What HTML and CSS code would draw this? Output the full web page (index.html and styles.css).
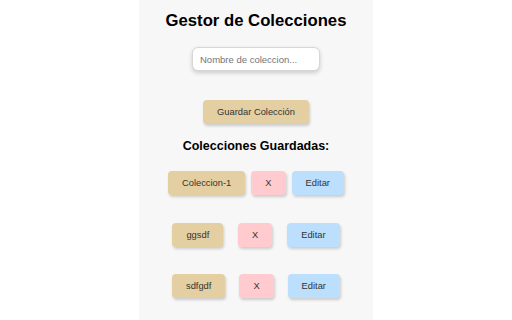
FILE: index.html
```html
<!DOCTYPE html>
<html lang="es">
<head>
<meta charset="utf-8">
<title>Gestor de Colecciones</title>
<link rel="stylesheet" href="styles.css">
</head>
<body>
<main class="panel">
  <h1 class="title">Gestor de Colecciones</h1>
  <input class="name-input" type="text" placeholder="Nombre de coleccion...">
  <button class="btn btn-beige btn-save">Guardar Colección</button>
  <h2 class="subtitle">Colecciones Guardadas:</h2>
  <ul class="list">
    <li class="row">
      <button class="btn btn-beige">Coleccion-1</button>
      <button class="btn btn-pink">X</button>
      <button class="btn btn-blue">Editar</button>
    </li>
    <li class="row">
      <button class="btn btn-beige">ggsdf</button>
      <button class="btn btn-pink">X</button>
      <button class="btn btn-blue">Editar</button>
    </li>
    <li class="row">
      <button class="btn btn-beige">sdfgdf</button>
      <button class="btn btn-pink">X</button>
      <button class="btn btn-blue">Editar</button>
    </li>
  </ul>
</main>
</body>
</html>
```

FILE: styles.css
```css
html, body {
  margin: 0;
  padding: 0;
  background: #ffffff;
  font-family: "Liberation Sans", Arial, sans-serif;
}

.panel {
  width: 234px;
  min-height: 100vh;
  margin: 0 auto;
  background: #f7f7f7;
  padding-top: 11px;
  box-sizing: border-box;
  display: flex;
  flex-direction: column;
  align-items: center;
}

.title {
  margin: 0;
  font-size: 16.7px;
  line-height: 20px;
  font-weight: bold;
  color: #000;
}

.name-input {
  margin-top: 16px;
  width: 128px;
  height: 24px;
  box-sizing: border-box;
  border: 1px solid #d6d6d6;
  border-radius: 6px;
  padding: 0 7px;
  font-family: "Liberation Sans", Arial, sans-serif;
  font-size: 9.5px;
  background: #fff;
  box-shadow: 0 2px 4px rgba(0, 0, 0, 0.18);
  outline: none;
}

.name-input::placeholder {
  color: #757575;
}

.btn {
  height: 24px;
  padding: 0 14px;
  border: none;
  border-radius: 4px;
  font-family: "Liberation Sans", Arial, sans-serif;
  font-size: 9.33px;
  color: #333;
  box-shadow: 1px 2px 3px rgba(0, 0, 0, 0.18);
}

.btn-save {
  margin-top: 29px;
}

.btn-beige {
  background: #e4cfa2;
}

.btn-pink {
  background: #ffcbcf;
}

.btn-blue {
  background: #bbdffc;
}

.subtitle {
  margin: 15px 0 0;
  font-size: 12.5px;
  line-height: 15px;
  font-weight: bold;
  color: #000;
}

.list {
  list-style: none;
  margin: 17px 0 0;
  padding: 0;
  width: 182px;
  display: flex;
  flex-direction: column;
  gap: 27.5px;
}

.row {
  display: flex;
  justify-content: space-around;
}
```
